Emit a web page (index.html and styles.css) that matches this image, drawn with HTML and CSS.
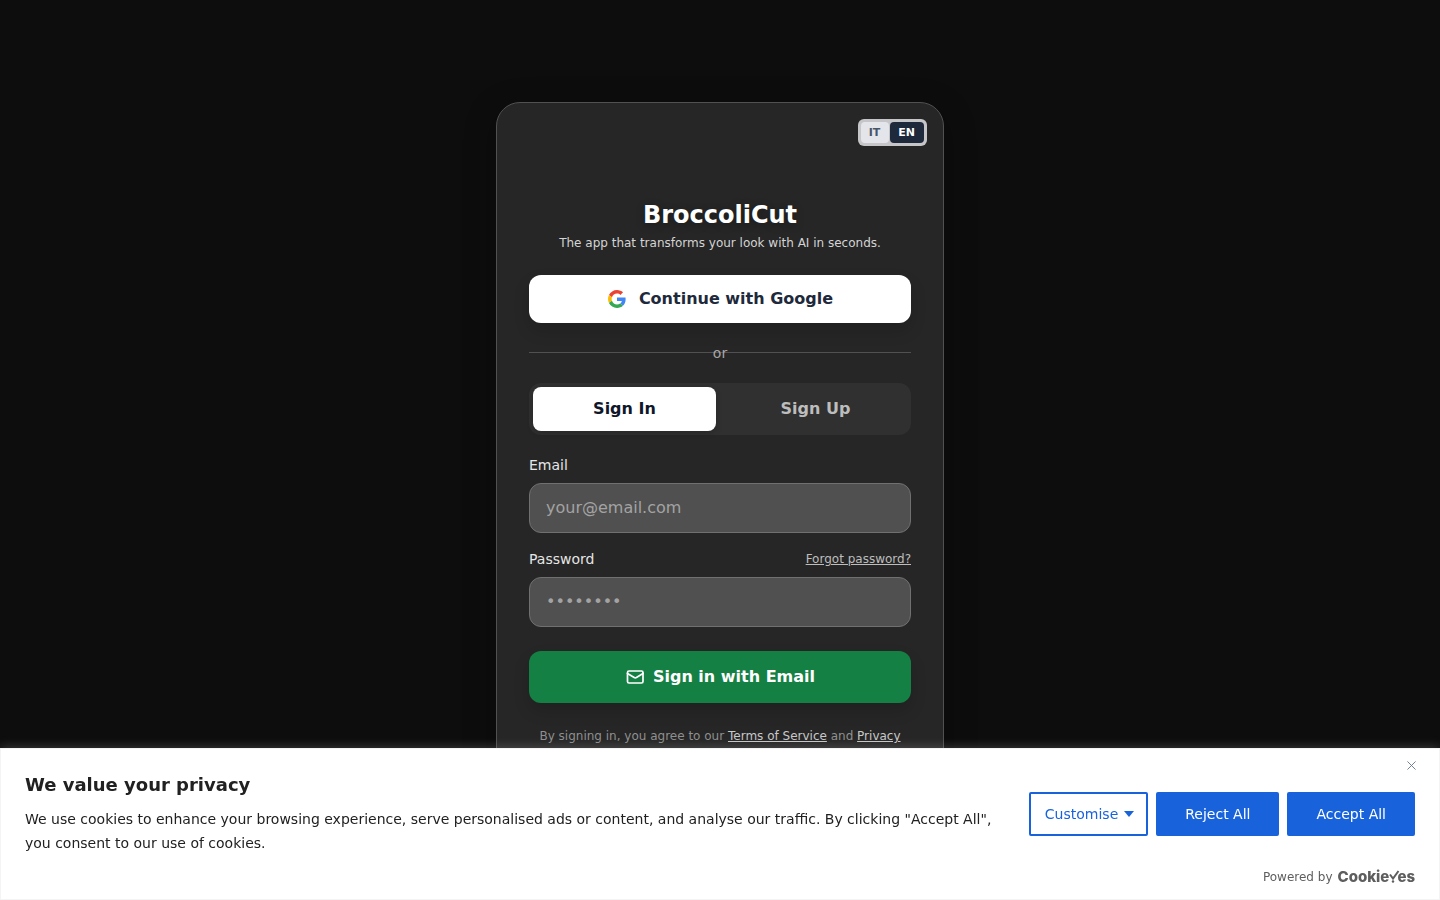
FILE: index.html
```html
<!DOCTYPE html>
<html lang="en">

<head>
    <meta charset="UTF-8">
    <meta name="viewport" content="width=device-width, initial-scale=1.0">
    <title>BroccoliCut</title>
    <link rel="stylesheet" href="styles.css">
</head>

<body>
    <main class="page">
        <section class="card">
            <div class="lang-switch">
                <button type="button" class="lang">IT</button>
                <button type="button" class="lang lang-active">EN</button>
            </div>

            <h1 class="brand">BroccoliCut</h1>
            <p class="tagline">The app that transforms your look with AI in seconds.</p>

            <button type="button" class="btn-google">
                <svg class="google-icon" viewBox="0 0 48 48" aria-hidden="true">
                    <path fill="#EA4335" d="M24 9.5c3.54 0 6.71 1.22 9.21 3.6l6.85-6.85C35.9 2.38 30.47 0 24 0 14.62 0 6.51 5.38 2.56 13.22l7.98 6.19C12.43 13.72 17.74 9.5 24 9.5z"/>
                    <path fill="#4285F4" d="M46.98 24.55c0-1.57-.15-3.09-.38-4.55H24v9.02h12.94c-.58 2.96-2.26 5.48-4.78 7.18l7.73 6c4.51-4.18 7.09-10.36 7.09-17.65z"/>
                    <path fill="#FBBC05" d="M10.53 28.59c-.48-1.45-.76-2.99-.76-4.59s.27-3.14.76-4.59l-7.98-6.19C.92 16.46 0 20.12 0 24c0 3.88.92 7.54 2.56 10.78l7.97-6.19z"/>
                    <path fill="#34A853" d="M24 48c6.48 0 11.93-2.13 15.89-5.81l-7.73-6c-2.15 1.45-4.92 2.3-8.16 2.3-6.26 0-11.57-4.22-13.47-9.91l-7.98 6.19C6.51 42.62 14.62 48 24 48z"/>
                </svg>
                <span>Continue with Google</span>
            </button>

            <div class="divider"><span>or</span></div>

            <div class="tabs">
                <button type="button" class="tab tab-active">Sign In</button>
                <button type="button" class="tab">Sign Up</button>
            </div>

            <form class="form">
                <div class="field">
                    <label for="email">Email</label>
                    <input type="email" id="email" placeholder="your@email.com">
                </div>
                <div class="field">
                    <div class="field-head">
                        <label for="password">Password</label>
                        <a href="#" class="forgot">Forgot password?</a>
                    </div>
                    <input type="password" id="password" placeholder="••••••••">
                </div>
                <button type="submit" class="btn-email">
                    <svg class="mail-icon" viewBox="0 0 20 20" aria-hidden="true">
                        <rect x="2.500" y="4" width="15.500" height="12" rx="1.500"/>
                        <path d="M2.500 6.500l6.700 4a2.200 2.200 0 0 0 2.200 0L18 6.500"/>
                    </svg>
                    <span>Sign in with Email</span>
                </button>
            </form>

            <p class="terms">By signing in, you agree to our <a href="#">Terms of Service</a> and <a href="#">Privacy Policy</a></p>
        </section>
    </main>

    <aside class="cookie-bar" aria-label="We value your privacy">
        <button type="button" class="cookie-close" aria-label="Close">
            <svg viewBox="0 0 10 10"><path d="M.5 .5l9 9M9.500 .5l-9 9"/></svg>
        </button>
        <div class="cookie-main">
            <div class="cookie-text">
                <h2>We value your privacy</h2>
                <p>We use cookies to enhance your browsing experience, serve personalised ads or content, and analyse our traffic. By clicking "Accept All", you consent to our use of cookies.</p>
            </div>
            <div class="cookie-buttons">
                <button type="button" class="cookie-btn cookie-outline">Customise</button>
                <button type="button" class="cookie-btn">Reject All</button>
                <button type="button" class="cookie-btn">Accept All</button>
            </div>
        </div>
        <div class="powered">
            Powered by
            <a href="#" class="cookieyes" aria-label="CookieYes">Cookie<svg viewBox="0 0 11 14" aria-hidden="true"><path d="M1 4.500l3 4L9.500 1"/><circle cx="4" cy="11.500" r="1.200"/></svg>es</a>
        </div>
    </aside>
</body>

</html>
```
FILE: styles.css
```css
* {
    margin: 0;
    padding: 0;
    box-sizing: border-box;
}

body {
    background-color: #0d0d0d;
    font-family: "DejaVu Sans", sans-serif;
    color: #ffffff;
}

button,
input {
    font-family: inherit;
    font-size: 16px;
    line-height: 24px;
}

button {
    border: none;
    cursor: pointer;
}

.page {
    min-height: 100vh;
    display: flex;
    align-items: center;
    justify-content: center;
}

.card {
    position: relative;
    width: 100%;
    max-width: 448px;
    padding: 96px 32px 32px;
    background-color: #262626;
    border: 1px solid #515151;
    border-radius: 24px;
    box-shadow: 0 8px 32px rgba(0, 0, 0, 0.3);
}

/* language */
.lang-switch {
    position: absolute;
    top: 16px;
    right: 16px;
    display: flex;
    gap: 1px;
    padding: 3px;
    background-color: #c6c6c9;
    border-radius: 6px;
}

.lang {
    padding: 0 9px 0 8px;
    font-size: 11px;
    font-weight: 700;
    line-height: 21px;
    color: #475569;
    background-color: #e4e5ea;
    border-radius: 4px;
}

.lang-active {
    color: #ffffff;
    background-color: #1e293b;
}

.brand {
    font-size: 24px;
    line-height: 32px;
    text-align: center;
    text-shadow: 0 2px 8px rgba(0, 0, 0, 0.3);
}

.tagline {
    margin: 4px 0 24px;
    font-size: 12px;
    line-height: 16px;
    text-align: center;
    color: #d4d4d4;
}

.btn-google,
.btn-email {
    width: 100%;
    display: flex;
    align-items: center;
    justify-content: center;
    font-weight: 700;
    border-radius: 12px;
    box-shadow: 0 8px 16px rgba(0, 0, 0, 0.15);
}

.btn-google {
    height: 48px;
    gap: 12px;
    color: #1e293b;
    background-color: #ffffff;
}

.google-icon {
    width: 20px;
    height: 20px;
    padding: 1px;
}

.divider {
    margin: 20px 0;
    font-size: 14px;
    line-height: 20px;
    text-align: center;
    color: #a6a6a6;
    background: linear-gradient(#515151, #515151) 0 9px / 100% 1px no-repeat;
}

.tabs {
    display: grid;
    grid-template-columns: 1fr 1fr;
    gap: 8px;
    padding: 4px;
    margin-bottom: 20px;
    background-color: #303030;
    border-radius: 12px;
}

.tab {
    height: 44px;
    font-weight: 700;
    color: #bdbdbd;
    background: none;
    border-radius: 8px;
}

.tab-active {
    color: #0f172a;
    background-color: #ffffff;
    box-shadow: 0 2px 6px rgba(0, 0, 0, 0.2);
}

.form {
    display: flex;
    flex-direction: column;
    gap: 16px;
}

.field {
    display: flex;
    flex-direction: column;
    gap: 8px;
    font-size: 14px;
    line-height: 20px;
    color: #e5e5e5;
}

.field-head {
    display: flex;
    justify-content: space-between;
}

.forgot {
    font-size: 12px;
    color: #bdbdbd;
}

.field input {
    width: 100%;
    padding: 12px 16px;
    color: #ffffff;
    background-color: #505050;
    border: 1px solid #707070;
    border-radius: 12px;
    outline: none;
}

.field input::placeholder {
    color: #a3a3a3;
}

.btn-email {
    height: 52px;
    gap: 8px;
    margin-top: 8px;
    color: #ffffff;
    background-color: #158044;
}

.mail-icon {
    width: 20px;
    height: 20px;
    fill: none;
    stroke: currentColor;
    stroke-width: 1.7;
    stroke-linecap: round;
    stroke-linejoin: round;
}

.terms {
    margin-top: 24px;
    font-size: 12px;
    line-height: 19px;
    text-align: center;
    color: #8f8f8f;
}

.terms a {
    color: #c8c8c8;
}

/* cookie banner */
.cookie-bar {
    position: fixed;
    left: 0;
    right: 0;
    bottom: 0;
    padding: 24px 24px 12px;
    color: #212121;
    background-color: #ffffff;
    border: 1px solid #f4f4f4;
    box-shadow: 0 -1px 10px rgba(172, 171, 171, 0.3);
}

.cookie-close {
    position: absolute;
    top: 11px;
    right: 22px;
    width: 11px;
    height: 11px;
    padding: 1px;
    background: none;
}

.cookie-close svg {
    display: block;
    fill: none;
    stroke: #64748b;
}

.cookie-main {
    display: flex;
    align-items: center;
    gap: 32px;
}

.cookie-text {
    flex: 1;
}

.cookie-text h2 {
    margin-bottom: 10px;
    font-size: 18px;
    line-height: 24px;
}

.cookie-text p {
    font-size: 14px;
    line-height: 24px;
}

.cookie-buttons {
    display: flex;
    gap: 8px;
}

.cookie-btn {
    height: 44px;
    padding: 0 27px;
    font-size: 14px;
    color: #ffffff;
    background-color: #1863dc;
    border: 2px solid #1863dc;
    border-radius: 2px;
}

.cookie-outline {
    display: flex;
    align-items: center;
    gap: 6px;
    padding: 0 12px 0 14px;
    color: #1863dc;
    background-color: #ffffff;
}

.cookie-outline::after {
    content: "";
    border: 5px solid transparent;
    border-top: 6px solid #1863dc;
    border-bottom: none;
}

.powered {
    display: flex;
    justify-content: flex-end;
    gap: 5px;
    margin-top: 12px;
    font-size: 12px;
    line-height: 20px;
    color: #5e5e5e;
}

.cookieyes {
    display: flex;
    align-items: center;
    font-family: Inter, sans-serif;
    font-size: 15px;
    font-weight: 800;
    color: #5e5e5e;
    text-decoration: none;
}

.cookieyes svg {
    width: 11px;
    height: 14px;
    margin: 0 -3px 0 0;
    fill: none;
    stroke: currentColor;
    stroke-width: 2;
}

.cookieyes circle {
    fill: currentColor;
    stroke: none;
}
```
